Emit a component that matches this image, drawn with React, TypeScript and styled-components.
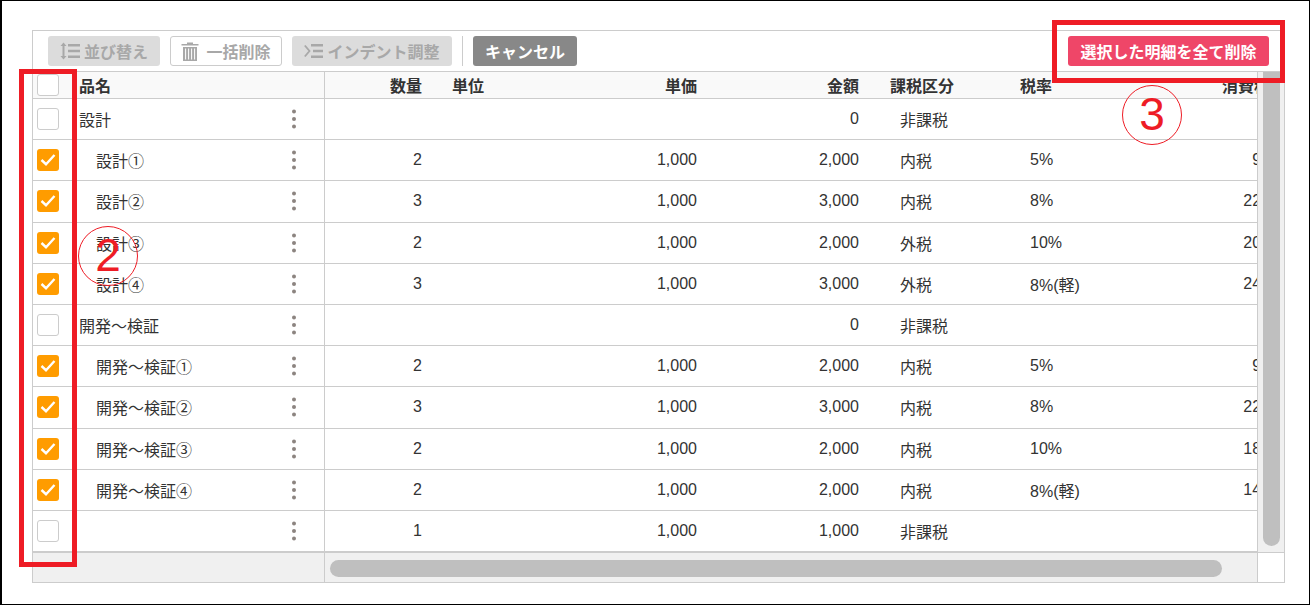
import React from "react";
import styled, { createGlobalStyle } from "styled-components";

const GlobalStyle = createGlobalStyle`
  html, body {
    margin: 0;
    padding: 0;
    background: #fff;
  }
  body {
    font-family: "Liberation Sans", "Noto Sans CJK JP", sans-serif;
    font-size: 16px;
    color: #333;
  }
`;

const Frame = styled.div`
  position: relative;
  box-sizing: border-box;
  width: 1310px;
  height: 605px;
  padding: 29px 0 0 30px;
  border: solid #000;
  border-width: 1px 1px 1px 2px;
  overflow: hidden;
`;

const Panel = styled.div`
  box-sizing: border-box;
  width: 1253px;
  height: 553px;
  border: 1px solid #ccc;
  display: flex;
  flex-direction: column;
`;

const Toolbar = styled.div`
  display: flex;
  align-items: center;
  gap: 10px;
  height: 40px;
  flex: none;
  box-sizing: border-box;
  padding: 0 15px;
`;

const ToolButton = styled.div<{ $variant: "muted" | "outline" | "dark" | "danger" }>`
  box-sizing: border-box;
  height: 30px;
  display: flex;
  align-items: center;
  justify-content: center;
  gap: 4px;
  border-radius: 3px;
  font-weight: 700;
  font-size: 16px;
  white-space: nowrap;
  color: ${(p) => (p.$variant === "dark" || p.$variant === "danger" ? "#fff" : "#a8a8a8")};
  background: ${(p) =>
    p.$variant === "muted"
      ? "#dcdcdc"
      : p.$variant === "dark"
        ? "#888"
        : p.$variant === "danger"
          ? "#ef4668"
          : "#fff"};
  border: ${(p) => (p.$variant === "outline" ? "1px solid #ccc" : "none")};
`;

const SortButton = styled(ToolButton)`
  width: 112px;
`;
const BulkButton = styled(ToolButton)`
  width: 112px;
  gap: 7px;
`;
const IndentButton = styled(ToolButton)`
  width: 160px;
`;
const CancelButton = styled(ToolButton)`
  width: 104px;
`;
const DeleteButton = styled(ToolButton)`
  width: 201px;
  margin-left: auto;
`;

const Separator = styled.div`
  width: 1px;
  height: 30px;
  background: #ccc;
`;

const Row = styled.div<{ $head?: boolean }>`
  display: grid;
  grid-template-columns: 292px 932px;
  box-sizing: border-box;
  height: ${(p) => (p.$head ? "28px" : "41.2px")};
  border-top: ${(p) => (p.$head ? "1px solid #ccc" : "none")};
  border-bottom: 1px solid #ccc;
  background: ${(p) => (p.$head ? "#f9f9f9" : "#fff")};
  font-weight: ${(p) => (p.$head ? 700 : 400)};
`;

const Fixed = styled.div`
  display: flex;
  align-items: center;
  border-right: 1px solid #ccc;
  padding-left: 4px;
  min-width: 0;
`;

const Box = styled.div<{ $on?: boolean }>`
  box-sizing: border-box;
  width: 22px;
  height: 22px;
  flex: none;
  border-radius: 3px;
  border: ${(p) => (p.$on ? "none" : "1px solid #ccc")};
  background: ${(p) => (p.$on ? "#ff9c00" : "#fff")};
  display: flex;
  align-items: center;
  justify-content: center;
`;

const Name = styled.div<{ $indent?: boolean }>`
  flex: 1;
  margin-left: 20px;
  padding-left: ${(p) => (p.$indent ? "17px" : "0")};
  white-space: nowrap;
`;

const Kebab = styled.svg`
  width: 4px;
  height: 20px;
  flex: none;
  margin-right: 28px;
`;

const Scroller = styled.div`
  overflow: hidden;
  display: grid;
  grid-template-columns: 97px 128px 147px 162px 130px 111px 170px;
  align-items: center;
`;

const Cell = styled.div<{ $align?: "left" | "right"; $pad?: number }>`
  text-align: ${(p) => p.$align ?? "right"};
  padding-left: ${(p) => p.$pad ?? 0}px;
  white-space: nowrap;
`;

const Middle = styled.div`
  display: flex;
  flex: none;
`;

const Rows = styled.div`
  width: 1224px;
  flex: none;
`;

const VTrack = styled.div`
  box-sizing: border-box;
  width: 27px;
  height: 481px;
  background: #f0f0f0;
  border: solid #ccc;
  border-width: 1px 0 0 1px;
  padding: 0 4px 6px 5px;
  display: flex;
`;

const VThumb = styled.div`
  flex: 1;
  background: #bfbfbf;
  border-radius: 0 0 9px 9px;
`;

const Footer = styled.div`
  display: grid;
  grid-template-columns: 292px 932px 27px;
  flex: 1;
  border-top: 1px solid #ccc;
`;

const FootLeft = styled.div`
  background: #f0f0f0;
  border-right: 1px solid #ccc;
`;

const HTrack = styled.div`
  background: #f0f0f0;
  padding: 7px 35px 5px 5px;
  display: flex;
`;

const HThumb = styled.div`
  flex: 1;
  background: #bfbfbf;
  border-radius: 9px;
`;

const Corner = styled.div`
  background: #fff;
  border-left: 1px solid #ccc;
`;

const RedBox = styled.div<{ $x: number; $y: number; $w: number; $h: number }>`
  position: absolute;
  box-sizing: border-box;
  left: ${(p) => p.$x}px;
  top: ${(p) => p.$y}px;
  width: ${(p) => p.$w}px;
  height: ${(p) => p.$h}px;
  border: 5px solid #ee1c25;
`;

const CircleNum = styled.div<{ $x: number; $y: number }>`
  position: absolute;
  box-sizing: border-box;
  left: ${(p) => p.$x}px;
  top: ${(p) => p.$y}px;
  width: 60px;
  height: 60px;
  border-radius: 50%;
  border: 1.5px solid #ee1c25;
  color: #ee1c25;
  font-size: 46px;
  line-height: 57px;
  text-align: center;
`;

const SortIcon = () => (
  <svg width="20" height="18" viewBox="0 0 20 18">
    <path d="M3.5 0.5 L6.5 4 L4.5 4 L4.5 14 L6.5 14 L3.5 17.5 L0.5 14 L2.5 14 L2.5 4 L0.5 4 Z" fill="#a8a8a8" />
    <path d="M8 2 h12 v2.6 h-12 Z M8 7.7 h12 v2.6 h-12 Z M8 13.4 h12 v2.6 h-12 Z" fill="#a8a8a8" />
  </svg>
);

const TrashIcon = () => (
  <svg width="18" height="19" viewBox="0 0 18 19">
    <path d="M6 0.5 h6 v1.5 h5.5 v1.6 h-17 v-1.6 h5.5 Z" fill="#a8a8a8" />
    <path d="M2 5 h14 v14 h-14 Z" fill="#a8a8a8" />
    <path d="M4.6 6.5 v11 M7.6 6.5 v11 M10.6 6.5 v11 M13.6 6.5 v11" stroke="#fff" strokeWidth="1" />
  </svg>
);

const IndentIcon = () => (
  <svg width="19" height="16" viewBox="0 0 19 16">
    <path d="M0.8 2.5 L5.5 8 L0.8 13.5" fill="none" stroke="#a8a8a8" strokeWidth="1.8" />
    <path d="M7 1 h12 v2.5 h-12 Z M9 6.8 h10 v2.5 h-10 Z M7 12.5 h12 v2.5 h-12 Z" fill="#a8a8a8" />
  </svg>
);

const CheckMark = () => (
  <svg width="16" height="14" viewBox="0 0 16 14">
    <path d="M1.5 7 L6 11.2 L14.5 2" fill="none" stroke="#fff" strokeWidth="2.4" />
  </svg>
);

const MoreDots = () => (
  <Kebab viewBox="0 0 4 20">
    <circle cx="2" cy="2.5" r="2" fill="#8c8480" />
    <circle cx="2" cy="10" r="2" fill="#8c8480" />
    <circle cx="2" cy="17.5" r="2" fill="#8c8480" />
  </Kebab>
);

type Line = {
  name: string;
  checked?: boolean;
  qty?: string;
  price?: string;
  amount: string;
  taxType: string;
  rate?: string;
  tax?: string;
};

const lines: Line[] = [
  { name: "設計", amount: "0", taxType: "非課税" },
  { name: "設計①", checked: true, qty: "2", price: "1,000", amount: "2,000", taxType: "内税", rate: "5%", tax: "95" },
  { name: "設計②", checked: true, qty: "3", price: "1,000", amount: "3,000", taxType: "内税", rate: "8%", tax: "222" },
  { name: "設計③", checked: true, qty: "2", price: "1,000", amount: "2,000", taxType: "外税", rate: "10%", tax: "200" },
  { name: "設計④", checked: true, qty: "3", price: "1,000", amount: "3,000", taxType: "外税", rate: "8%(軽)", tax: "240" },
  { name: "開発～検証", amount: "0", taxType: "非課税" },
  { name: "開発～検証①", checked: true, qty: "2", price: "1,000", amount: "2,000", taxType: "内税", rate: "5%", tax: "95" },
  { name: "開発～検証②", checked: true, qty: "3", price: "1,000", amount: "3,000", taxType: "内税", rate: "8%", tax: "222" },
  { name: "開発～検証③", checked: true, qty: "2", price: "1,000", amount: "2,000", taxType: "内税", rate: "10%", tax: "181" },
  { name: "開発～検証④", checked: true, qty: "2", price: "1,000", amount: "2,000", taxType: "内税", rate: "8%(軽)", tax: "148" },
  { name: "", qty: "1", price: "1,000", amount: "1,000", taxType: "非課税" },
];

const App = () => {
  return (
    <Frame>
      <GlobalStyle />
      <Panel>
        <Toolbar>
          <SortButton $variant="muted">
            <SortIcon />
            並び替え
          </SortButton>
          <BulkButton $variant="outline">
            <TrashIcon />
            一括削除
          </BulkButton>
          <IndentButton $variant="muted">
            <IndentIcon />
            インデント調整
          </IndentButton>
          <Separator />
          <CancelButton $variant="dark">キャンセル</CancelButton>
          <DeleteButton $variant="danger">選択した明細を全て削除</DeleteButton>
        </Toolbar>
        <Middle>
          <Rows>
            <Row $head>
              <Fixed>
                <Box />
                <Name>品名</Name>
              </Fixed>
              <Scroller>
                <Cell>数量</Cell>
                <Cell $align="left" $pad={30}>単位</Cell>
                <Cell>単価</Cell>
                <Cell>金額</Cell>
                <Cell $align="left" $pad={31}>課税区分</Cell>
                <Cell $align="left" $pad={31}>税率</Cell>
                <Cell>消費税</Cell>
              </Scroller>
            </Row>
            {lines.map((l, i) => (
              <Row key={i}>
                <Fixed>
                  <Box $on={l.checked}>{l.checked && <CheckMark />}</Box>
                  <Name $indent={l.checked}>{l.name}</Name>
                  <MoreDots />
                </Fixed>
                <Scroller>
                  <Cell>{l.qty}</Cell>
                  <Cell />
                  <Cell>{l.price}</Cell>
                  <Cell>{l.amount}</Cell>
                  <Cell $align="left" $pad={41}>{l.taxType}</Cell>
                  <Cell $align="left" $pad={41}>{l.rate}</Cell>
                  <Cell>{l.tax}</Cell>
                </Scroller>
              </Row>
            ))}
          </Rows>
          <VTrack>
            <VThumb />
          </VTrack>
        </Middle>
        <Footer>
          <FootLeft />
          <HTrack>
            <HThumb />
          </HTrack>
          <Corner />
        </Footer>
      </Panel>
      <RedBox $x={17} $y={68} $w={58} $h={498} />
      <RedBox $x={1050} $y={19} $w={233} $h={63} />
      <CircleNum $x={76} $y={225}>2</CircleNum>
      <CircleNum $x={1120} $y={84}>3</CircleNum>
    </Frame>
  );
};

export default App;
